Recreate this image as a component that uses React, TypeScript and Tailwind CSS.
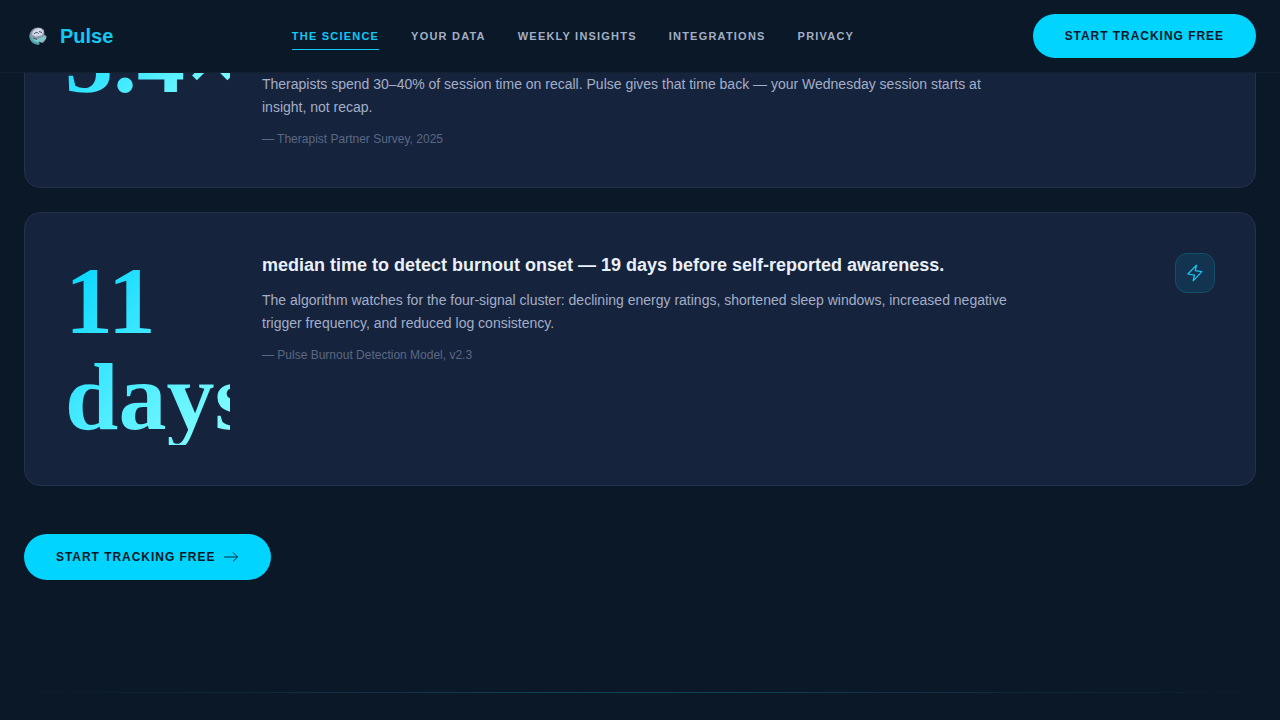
import React from "react";

type Finding = {
  value: string;
  heading?: string;
  body: string;
  source: string;
  icon?: React.ReactNode;
};

const navLinks = [
  { label: "The Science", href: "#science", active: true },
  { label: "Your Data", href: "#data", active: false },
  { label: "Weekly Insights", href: "#insights", active: false },
  { label: "Integrations", href: "#integrations", active: false },
  { label: "Privacy", href: "#privacy", active: false },
];

const BoltIcon = () => (
  <svg
    viewBox="0 0 24 24"
    className="h-5 w-5"
    fill="none"
    stroke="currentColor"
    strokeWidth="1.5"
    strokeLinecap="round"
    strokeLinejoin="round"
    aria-hidden="true"
  >
    <path d="M3.500 13.200 13.800 2.500l-1.500 6.600 7.900 1.300L9.800 21.500l1.500-7z" />
  </svg>
);

const ArrowIcon = () => (
  <svg
    viewBox="0 0 16 16"
    className="h-4 w-4"
    fill="none"
    stroke="currentColor"
    strokeWidth="0.9"
    strokeLinecap="round"
    strokeLinejoin="round"
    aria-hidden="true"
  >
    <path d="M1.500 8h13M10.300 3.800 14.500 8l-4.200 4.200" />
  </svg>
);

const findings: Finding[] = [
  {
    value: "3.4×",
    body: "Therapists spend 30–40% of session time on recall. Pulse gives that time back — your Wednesday session starts at insight, not recap.",
    source: "— Therapist Partner Survey, 2025",
  },
  {
    value: "11 days",
    heading:
      "median time to detect burnout onset — 19 days before self-reported awareness.",
    body: "The algorithm watches for the four-signal cluster: declining energy ratings, shortened sleep windows, increased negative trigger frequency, and reduced log consistency.",
    source: "— Pulse Burnout Detection Model, v2.3",
    icon: <BoltIcon />,
  },
];

const LogoMark = () => (
  <svg viewBox="0 0 28 28" className="h-7 w-7" aria-hidden="true">
    <circle cx="14" cy="14" r="8.5" fill="#8a9aaa" />
    <path d="M5.5 13a8.5 8.5 0 0 0 10 9.4l-1-3.4-5-1.5z" fill="#4fa3ab" />
    <path d="M9 9.5c2-3 6-4 8.5-2.5l2 3-2 3.5-6 1-3.5-2z" fill="#d3d9e6" />
    <path d="M7 14.5c3 3.5 8 3.5 13-.5l2.5 1c-2 5-9 7-13 3.5z" fill="#7fc9cc" />
    <path
      d="M10 12c1.5-2 3-2 4.5-.5M15 9.5l3 1M9 16l4 1.5"
      stroke="#3c4c60"
      strokeWidth="1"
      fill="none"
    />
    <path d="M20 8l.5 5 2.5 1V9z" fill="#0a1828" />
    <path d="M15 19.5l1 3.5 3-1.5z" fill="#0a1828" />
  </svg>
);

const Header = () => (
  <header className="sticky top-0 z-10 border-b border-[#13202f] bg-[#0a1828]">
    <div className="flex h-[72px] items-center justify-between px-6">
      <a href="#top" className="flex items-center gap-2">
        <LogoMark />
        <span className="text-xl font-bold text-[#14c8f4]">Pulse</span>
      </a>
      <nav className="flex gap-8">
        {navLinks.map((link) => (
          <a
            key={link.label}
            href={link.href}
            className={
              link.active
                ? "border-b border-[#14c8f4] py-1 text-[11px] leading-[18px] font-bold tracking-[0.11em] text-[#14c8f4] uppercase"
                : "border-b border-transparent py-1 text-[11px] leading-[18px] font-bold tracking-[0.11em] text-[#a3afc4] uppercase"
            }
          >
            {link.label}
          </a>
        ))}
      </nav>
      <button
        type="button"
        className="h-11 rounded-full bg-[#00d4ff] px-8 text-xs font-bold tracking-[0.08em] text-[#0a1828] uppercase"
      >
        Start tracking free
      </button>
    </div>
  </header>
);

const FindingCard = ({ value, heading, body, source, icon }: Finding) => (
  <article className="flex gap-8 rounded-2xl border border-[#24304d] bg-[#16233d] p-10">
    <div className="w-[165px] shrink-0 self-start bg-linear-135/srgb from-[#00d4ff] to-[#8affff] bg-clip-text font-['Liberation_Serif',serif] text-8xl leading-none font-bold text-transparent">
      {value}
    </div>
    <div className="flex min-h-[135px] max-w-[760px] flex-1 flex-col">
      {heading && (
        <h3 className="mb-3 text-lg leading-6 font-bold text-[#e8f0fa]">
          {heading}
        </h3>
      )}
      <div className={heading ? "" : "mt-auto"}>
        <p className="text-sm leading-[23px] text-[#a3afc8]">{body}</p>
        <p className="mt-3 text-xs leading-4 text-[#5a6883]">{source}</p>
      </div>
    </div>
    {icon && (
      <div className="ml-auto flex h-10 w-10 shrink-0 items-center justify-center rounded-xl border border-[#135068] bg-[#123450] text-[#1cc4ee]">
        {icon}
      </div>
    )}
  </article>
);

const App = () => {
  return (
    <div className="min-h-screen bg-[#0a1828] font-['Liberation_Sans',Arial,sans-serif]">
      <Header />
      {/* the section runs up under the sticky header */}
      <main className="-mt-[102px]">
        <section className="px-6">
          <div className="flex flex-col gap-6">
            {findings.map((finding) => (
              <FindingCard key={finding.value} {...finding} />
            ))}
          </div>
          <button
            type="button"
            className="mt-12 flex h-[46px] items-center gap-2 rounded-full bg-[#00d4ff] px-8 text-xs font-bold tracking-[0.08em] text-[#0a1828] uppercase"
          >
            Start tracking free
            <ArrowIcon />
          </button>
        </section>
        <div className="mt-28 mb-6 h-px bg-linear-to-r from-transparent via-[#12455c] to-transparent" />
      </main>
    </div>
  );
};

export default App;
